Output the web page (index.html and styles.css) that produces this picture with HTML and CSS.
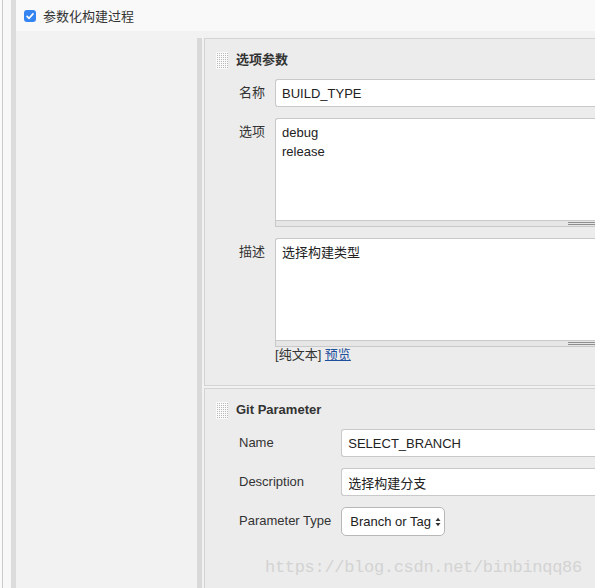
FILE: index.html
```html
<!DOCTYPE html>
<html lang="zh-CN">
<head>
<meta charset="utf-8">
<title>参数化构建过程</title>
<link rel="stylesheet" href="styles.css">
</head>
<body>
<div class="page">
  <div class="frame">
    <div class="section">
      <div class="section-head">
        <span class="check">
          <svg width="12" height="12" viewBox="0 0 12 12"><rect width="12" height="12" rx="3" fill="#3484f2"/><path d="M3.1 6.3 L5.1 8.3 L9 3.9" fill="none" stroke="#fff" stroke-width="1.7" stroke-linecap="round" stroke-linejoin="round"/></svg>
        </span>
        <span>参数化构建过程</span>
      </div>
      <div class="section-body">
        <div class="gutter"></div>
        <div class="params">
          <div class="param">
            <div class="param-head">
              <svg class="handle" width="12" height="17" viewBox="0 0 12 17"><defs><pattern id="dots1" width="2" height="2" patternUnits="userSpaceOnUse"><rect x="1" y="1" width="1" height="1" fill="#b9b9b9"/></pattern></defs><rect width="12" height="17" fill="#fafafa"/><rect width="12" height="17" fill="url(#dots1)"/></svg>
              <span class="param-title">选项参数</span>
            </div>
            <div class="fields">
              <label class="field-label">名称</label>
              <input class="text" type="text" value="BUILD_TYPE">
              <label class="field-label">选项</label>
              <div class="area-wrap">
                <textarea class="area">debug
release</textarea>
                <div class="area-handle"></div>
              </div>
              <label class="field-label">描述</label>
              <div class="area-wrap">
                <textarea class="area">选择构建类型</textarea>
                <div class="area-handle"></div>
                <div class="hint">[纯文本] <a href="#">预览</a></div>
              </div>
            </div>
          </div>
          <div class="param param-last">
            <div class="param-head">
              <svg class="handle" width="12" height="17" viewBox="0 0 12 17"><defs><pattern id="dots2" width="2" height="2" patternUnits="userSpaceOnUse"><rect x="1" y="1" width="1" height="1" fill="#b9b9b9"/></pattern></defs><rect width="12" height="17" fill="#fafafa"/><rect width="12" height="17" fill="url(#dots2)"/></svg>
              <span class="param-title">Git Parameter</span>
            </div>
            <div class="fields">
              <label class="field-label">Name</label>
              <input class="text" type="text" value="SELECT_BRANCH">
              <label class="field-label">Description</label>
              <input class="text" type="text" value="选择构建分支">
              <label class="field-label">Parameter Type</label>
              <div class="select-row">
                <div class="select">
                  <span>Branch or Tag</span>
                  <svg width="6" height="10" viewBox="0 0 6 10"><path d="M0.5 4 L3 0.8 L5.5 4 Z M0.5 6 L3 9.2 L5.5 6 Z" fill="#333"/></svg>
                </div>
              </div>
            </div>
          </div>
        </div>
      </div>
    </div>
  </div>
  <div class="watermark">https://blog.csdn.net/binbinqq86</div>
</div>
</body>
</html>
```
FILE: styles.css
```css
html, body {
  margin: 0;
  padding: 0;
  overflow: hidden;
}

body {
  font-family: "Liberation Sans", "Noto Sans CJK SC", sans-serif;
  font-size: 13px;
  color: #333;
  background: #fafafa;
}

/* the form continues past the right edge of the window,
   so panels and fields are open on their right side */
.page {
  position: relative;
  width: 100%;
  height: 588px;
  display: flex;
  padding-left: 2px;
  background: #fafafa;
  box-sizing: border-box;
}

.frame {
  flex: 1;
  display: flex;
  border-left: 1px solid #cacaca;
  padding-left: 8px;
  background: #f8f8f8;
}

.section {
  flex: 1;
  display: flex;
  flex-direction: column;
  border-left: 5px solid #dcdcdc;
  background: #f2f2f2;
}

.section-head {
  height: 31px;
  display: flex;
  align-items: center;
  gap: 7px;
  padding-left: 8px;
  background: #f9f9f9;
  color: #333;
}

.check {
  display: flex;
  width: 12px;
  height: 12px;
}

.section-body {
  flex: 1;
  display: flex;
  padding-top: 7px;
}

.gutter {
  width: 181px;
  flex: none;
}

.params {
  flex: 1;
  display: flex;
  flex-direction: column;
  gap: 2px;
  border-left: 5px solid #d9d9d9;
  padding-left: 2px;
}

.param {
  background: #ececec;
  border: 1px solid #d3d3d3;
  border-right: none;
  padding: 13px 0 22px 11px;
}

.param-last {
  flex: 1;
  border-bottom: none;
}

.param-head {
  height: 17px;
  display: flex;
  align-items: center;
  gap: 8px;
  margin-bottom: 10px;
}

.handle {
  flex: none;
  display: block;
}

.param-title {
  font-weight: bold;
  color: #333;
  line-height: 15px;
  margin-top: -2px;
}

.fields {
  display: grid;
  grid-template-columns: max-content 1fr;
  column-gap: 10px;
  row-gap: 11px;
  padding-left: 23px;
  align-items: start;
}

.field-label {
  line-height: 28px;
  color: #333;
}

.text {
  box-sizing: border-box;
  height: 28px;
  width: 100%;
  margin: 0;
  padding: 0 6px;
  border: 1px solid #c9c9c9;
  border-right: none;
  border-radius: 3px 0 0 3px;
  background: #fff;
  font: inherit;
  color: #222;
  outline: none;
}

.area-wrap {
  display: flex;
  flex-direction: column;
}

.area {
  box-sizing: border-box;
  display: block;
  width: 100%;
  height: 103px;
  margin: 0;
  padding: 4px 6px;
  border: 1px solid #c9c9c9;
  border-right: none;
  border-radius: 3px 0 0 0;
  background: #fff;
  font: inherit;
  line-height: 19px;
  color: #222;
  resize: none;
  overflow: hidden;
  outline: none;
}

.area-handle {
  box-sizing: border-box;
  height: 6px;
  border: 1px solid #c9c9c9;
  border-top: none;
  border-right: none;
  background:
    linear-gradient(#8e8e8e, #8e8e8e) 292px 1px / 80px 1px no-repeat,
    linear-gradient(#8e8e8e, #8e8e8e) 292px 3px / 80px 1px no-repeat,
    #e6e6e6;
}

.hint {
  line-height: 16px;
  color: #333;
}

.hint a {
  color: #1d4f9c;
  text-decoration: underline;
}

.select-row {
  display: flex;
}

.select {
  box-sizing: border-box;
  height: 29px;
  width: 104px;
  display: flex;
  align-items: center;
  justify-content: space-between;
  padding: 0 3px 0 8px;
  border: 1px solid #b8b8b8;
  border-radius: 5px;
  background: #fff;
  color: #222;
}

.select svg {
  display: block;
}

.watermark {
  position: absolute;
  left: 265px;
  top: 559px;
  font-family: "Liberation Mono", monospace;
  font-size: 17px;
  line-height: 18px;
  letter-spacing: -0.3px;
  color: #d3d3d3;
  white-space: nowrap;
}
```
